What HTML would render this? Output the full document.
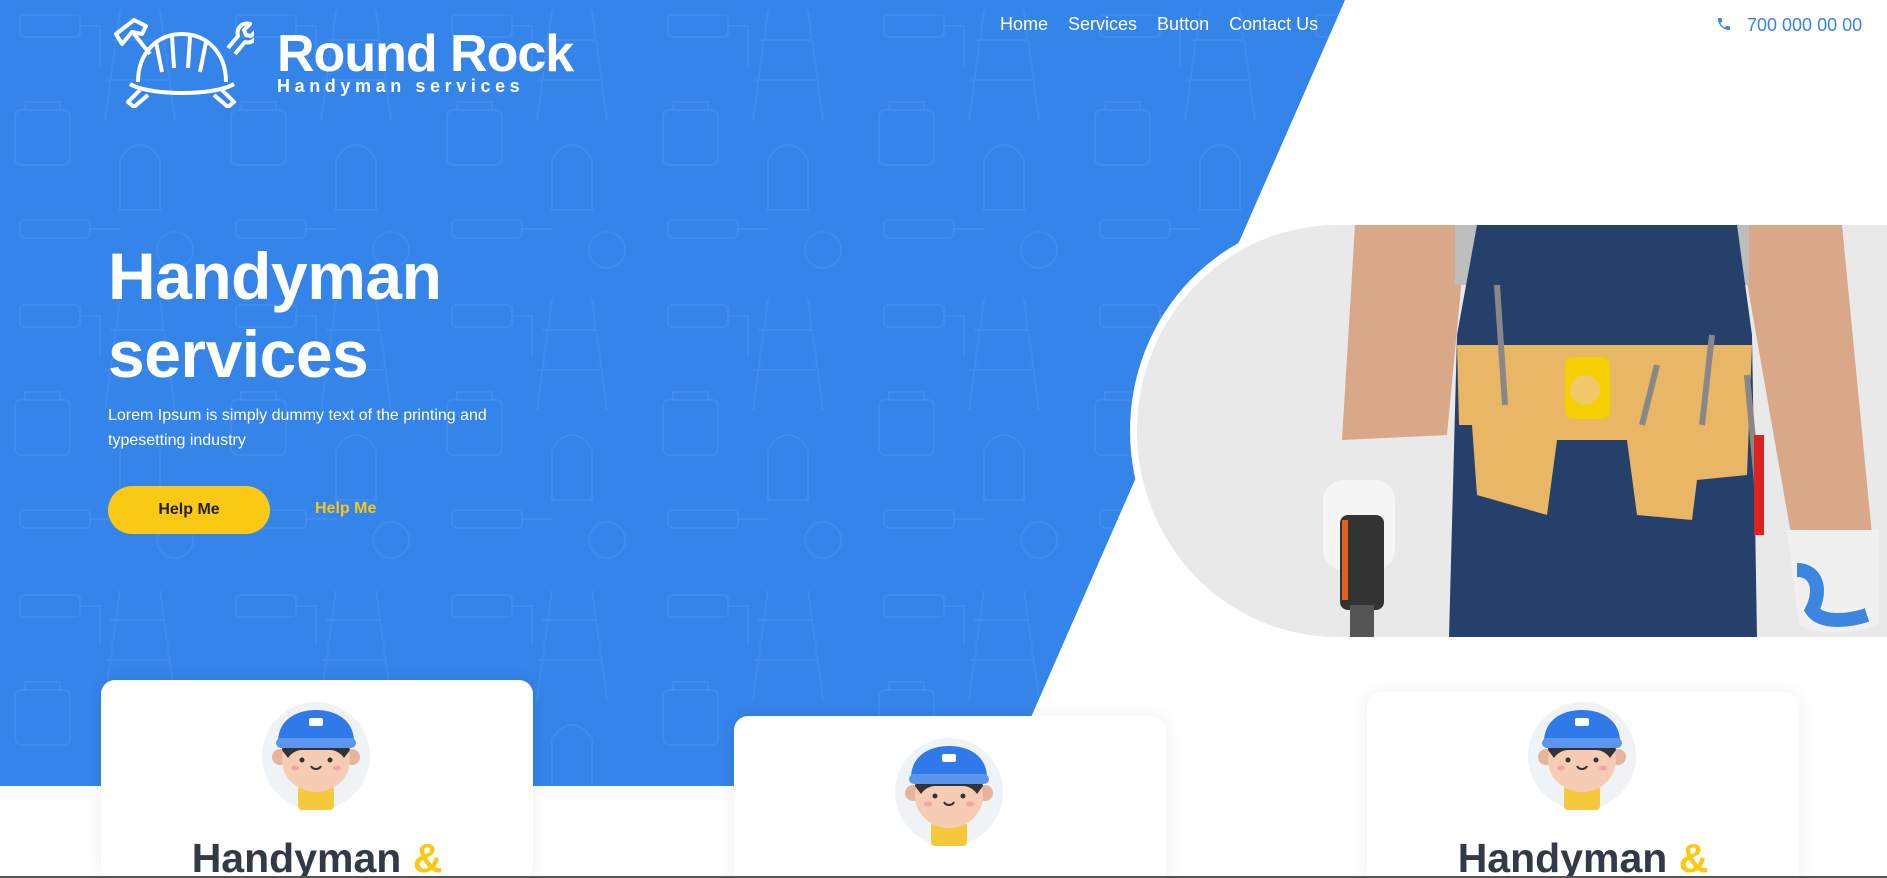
<!DOCTYPE html>
<html style="width:1887px;height:878px;overflow:hidden"><head><meta charset="utf-8">
<style>
*{margin:0;padding:0;box-sizing:border-box}
body{width:1887px;height:878px;overflow:hidden;background:#fff;font-family:"Liberation Sans",sans-serif;position:relative}
.abs{position:absolute}
.nav a{color:#fff;text-decoration:none;font-size:18px;margin-right:20px}
.card{position:absolute;background:#fff;border-radius:14px;box-shadow:0 0 18px rgba(0,0,0,0.07);width:432px;height:200px}
.card h3{position:absolute;left:0;right:0;text-align:center;font-size:41px;font-weight:bold;color:#333a47}
.card h3 span{color:#f9c914}
</style></head><body>
<svg class="abs" style="left:0;top:0" width="1887" height="878">
<defs>
<pattern id="p" width="216" height="290" patternUnits="userSpaceOnUse">
<g fill="none" stroke="#ffffff" stroke-opacity="0.06" stroke-width="2">
<rect x="20" y="15" width="60" height="22" rx="4"/><path d="M80 26h20v40"/>
<path d="M120 10l-15 110M160 10l15 110M110 40h55M106 80h62"/>
<rect x="15" y="110" width="55" height="55" rx="6"/><path d="M25 110v-8h35v8"/>
<path d="M120 160c10-20 30-20 40 0v50h-40z"/>
<rect x="20" y="220" width="70" height="18" rx="5"/><path d="M90 229h30"/>
<circle cx="175" cy="250" r="18"/>
</g></pattern>
</defs>
<polygon points="0,0 1345,0 1032,715 1000,786 0,786" fill="#3584ea"/>
<polygon points="0,0 1345,0 1032,715 1000,786 0,786" fill="url(#p)"/>
</svg>

<svg class="abs" style="left:108px;top:12px" width="146" height="96" viewBox="0 0 146 96" fill="none" stroke="#fff" stroke-width="4" stroke-linejoin="round">
<path d="M30 70c0-30 20-48 44-48s44 18 44 48"/>
<path d="M22 72c20 12 84 12 104 0"/>
<path d="M48 30l6 30M64 24l2 32M82 24l-2 32M98 30l-6 30"/>
<path d="M32 78l-12 12 6 5 14-12M114 78l12 12-6 5-14-12"/>
<path d="M8 22l18-14 12 6-4 8-10-2-10 12zM26 22l16 20"/>
<path d="M120 36l10-12c-2-8 4-14 12-12l-6 6 2 5 5 1 6-6c2 8-5 14-12 12l-10 12"/>
</svg>
<div class="abs" style="left:277px;top:24px;color:#fff;font-weight:bold;font-size:52px;letter-spacing:-1px">Round Rock</div>
<div class="abs" style="left:277px;top:76px;color:#fff;font-weight:bold;font-size:18px;letter-spacing:4.6px">Handyman services</div>

<div class="abs nav" style="left:1000px;top:14px"><a>Home</a><a>Services</a><a>Button</a><a style="margin:0">Contact Us</a></div>
<svg class="abs" style="left:1716px;top:16px" width="16" height="16" viewBox="0 0 24 24"><path fill="#3584ea" d="M6.6 10.8c1.4 2.8 3.8 5.1 6.6 6.6l2.2-2.2c.3-.3.7-.4 1-.2 1.1.4 2.3.6 3.6.6.6 0 1 .4 1 1V20c0 .6-.4 1-1 1C10.6 21 3 13.4 3 4c0-.6.4-1 1-1h3.5c.6 0 1 .4 1 1 0 1.3.2 2.5.6 3.6.1.3 0 .7-.2 1z"/></svg>
<div class="abs" style="left:1747px;top:15px;color:#3584ea;font-size:18px">700 000 00 00</div>

<div class="abs" style="left:108px;top:237px;color:#fff;font-weight:bold;font-size:66px;line-height:78px;letter-spacing:-0.5px">Handyman<br>services</div>
<div class="abs" style="left:108px;top:403px;color:#fff;font-size:16px;line-height:25px">Lorem Ipsum is simply dummy text of the printing and<br>typesetting industry</div>
<div class="abs" style="left:108px;top:486px;width:162px;height:48px;border-radius:24px;background:#f9c914;color:#222;font-weight:bold;font-size:16px;text-align:center;line-height:48px">Help Me</div>
<div class="abs" style="left:315px;top:500px;color:#f9c914;font-weight:bold;font-size:16px">Help Me</div>

<div class="abs" style="left:1130px;top:218px;width:770px;height:426px;background:#fff;border-radius:205px 0 0 205px / 213px 0 0 213px"></div>
<div class="abs" style="left:1137px;top:225px;width:760px;height:412px;background:#e9e9ea;border-radius:200px 0 0 200px / 206px 0 0 206px;overflow:hidden">
<svg width="750" height="412">
<polygon points="218,0 330,0 310,210 205,215" fill="#d9a888"/>
<polygon points="600,0 705,0 735,310 655,315" fill="#d9a888"/>
<polygon points="318,0 345,0 345,60 318,60" fill="#bdbdbd"/>
<polygon points="590,0 612,0 612,60 590,60" fill="#bdbdbd"/>
<polygon points="340,0 600,0 615,110 620,412 312,412 320,110" fill="#24406b"/>
<polygon points="320,120 615,120 610,250 560,255 555,295 500,290 490,215 420,215 410,290 340,270 335,200 322,200" fill="#e8b664"/>
<rect x="428" y="132" width="45" height="62" rx="8" fill="#f5d000"/>
<circle cx="448" cy="165" r="15" fill="#f2c96a"/>
<path d="M360 60l8 120M520 140l-15 60M575 110l-10 90M610 150l12 130" stroke="#888" stroke-width="6"/>
<rect x="617" y="210" width="10" height="100" fill="#d22"/>
<rect x="186" y="255" width="72" height="90" rx="20" fill="#f5f5f5"/>
<rect x="203" y="290" width="44" height="95" rx="8" fill="#333"/>
<rect x="205" y="295" width="6" height="80" fill="#e06020"/>
<rect x="213" y="380" width="24" height="32" fill="#555"/>
<path d="M650 305h92v95c-30 10-60 10-80 0z" fill="#f0f0f0"/>
<path d="M660 345c20 0 25 20 15 40 10 15 40 10 55 5" stroke="#3d86e0" stroke-width="14" fill="none"/>
</svg></div>

<div class="card" style="left:101px;top:680px"><svg class="abs" style="left:161px;top:22px" width="108" height="108" viewBox="0 0 108 108"><use href="#av"/></svg><h3 style="top:155px">Handyman <span>&amp;</span></h3></div>
<div class="card" style="left:734px;top:716px"><svg class="abs" style="left:161px;top:22px" width="108" height="108" viewBox="0 0 108 108"><use href="#av"/></svg></div>
<div class="card" style="left:1367px;top:692px"><svg class="abs" style="left:161px;top:10px" width="108" height="108" viewBox="0 0 108 108"><use href="#av"/></svg><h3 style="top:143px">Handyman <span>&amp;</span></h3></div>

<svg width="0" height="0" style="position:absolute"><defs>
<g id="av">
<circle cx="54" cy="54" r="54" fill="#f0f3f6"/>
<rect x="36" y="84" width="36" height="24" rx="4" fill="#f6c83c"/>
<circle cx="18" cy="55" r="8" fill="#e6b49a"/><circle cx="90" cy="55" r="8" fill="#e6b49a"/>
<ellipse cx="54" cy="58" rx="34" ry="32" fill="#f6cdb4"/>
<path d="M20 48c2-14 16-20 34-20s32 6 34 20l-6 8c-4-6-10-8-14-8H40c-4 0-10 2-14 8z" fill="#333"/>
<path d="M16 40c0-22 18-32 38-32s38 10 38 32z" fill="#2f7ae8"/>
<rect x="14" y="36" width="80" height="10" rx="5" fill="#5a95ee"/>
<rect x="47" y="16" width="14" height="8" rx="2" fill="#fff"/>
<circle cx="40" cy="58" r="2.5" fill="#333"/><circle cx="68" cy="58" r="2.5" fill="#333"/>
<ellipse cx="33" cy="66" rx="4" ry="2.5" fill="#f4a4a4"/><ellipse cx="75" cy="66" rx="4" ry="2.5" fill="#f4a4a4"/>
<path d="M49 64c2 4 8 4 10 0" stroke="#333" stroke-width="2" fill="none"/>
</g></defs></svg>
<div class="abs" style="left:0;top:876px;width:1887px;height:2px;background:#555"></div>
</body></html>
